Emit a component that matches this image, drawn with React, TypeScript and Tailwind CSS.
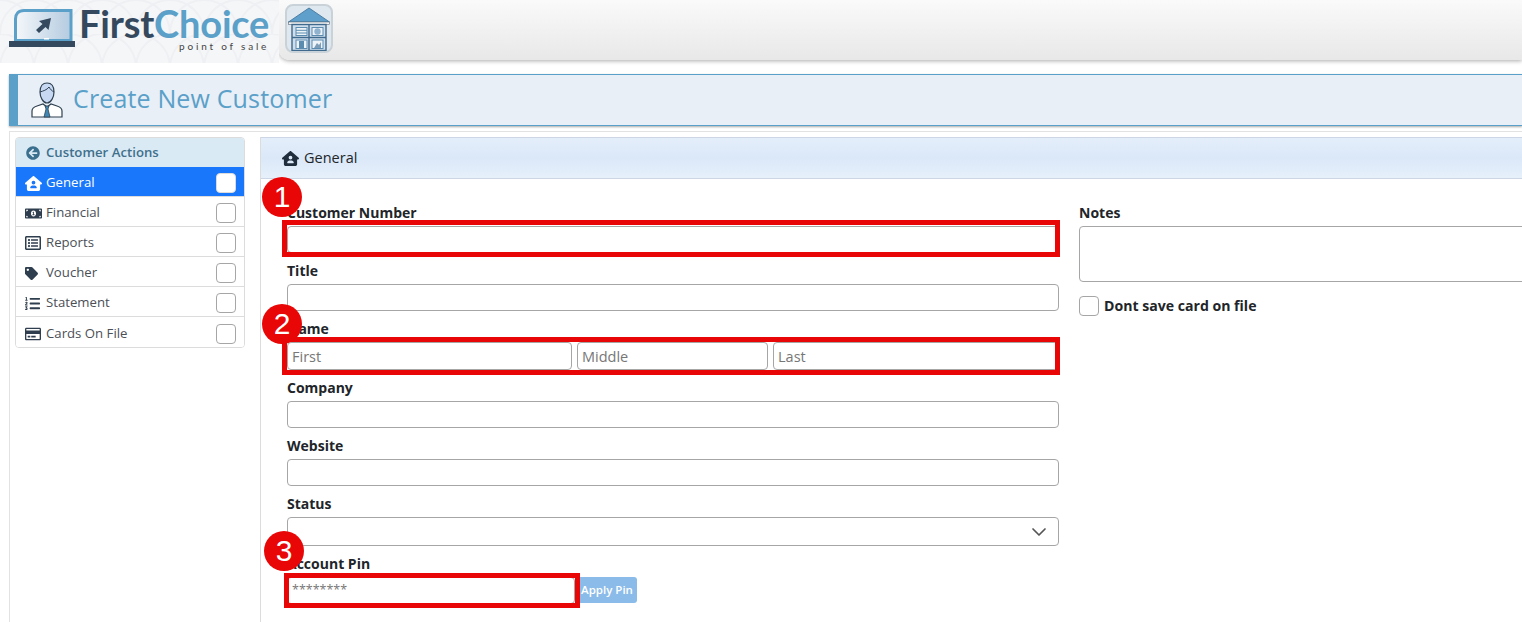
import { ReactNode } from "react";
import { FaArrowCircleLeft, FaRegListAlt, FaTag, FaListOl, FaRegCreditCard, FaMoneyBillAlt } from "react-icons/fa";
import { FaHouseUser } from "react-icons/fa6";

const MENU = [
  { label: "General", icon: FaHouseUser, size: 17, active: true },
  { label: "Financial", icon: FaMoneyBillAlt, size: 17 },
  { label: "Reports", icon: FaRegListAlt, size: 16 },
  { label: "Voucher", icon: FaTag, size: 13 },
  { label: "Statement", icon: FaListOl, size: 15 },
  { label: "Cards On File", icon: FaRegCreditCard, size: 16 },
];

const inputCls = "block w-full h-[27px] rounded-[4px] border border-[#a6a6a6] bg-white px-[4px] text-[14.5px] placeholder:text-[#777]";

function Logo() {
  return (
    <div className="relative flex h-[63px] w-[279px] shrink-0 items-start overflow-hidden bg-[#f5f6f8] pl-[9px] pt-[9px]">
      {/* faint arcs behind the logo */}
      <svg width="279" height="63" className="absolute left-0 top-0">
        <defs>
          <pattern id="arcs" width="34" height="34" patternUnits="userSpaceOnUse">
            <path d="M0 34C0 15 15 0 34 0M0 0c19 0 34 15 34 34" fill="none" stroke="#eff0f3" strokeWidth="2" />
          </pattern>
        </defs>
        <rect width="279" height="63" fill="url(#arcs)" />
      </svg>
      <svg width="66" height="38" viewBox="0 0 66 38" className="relative shrink-0">
        <defs>
          <linearGradient id="screen" x1="0" y1="0" x2="1" y2="0">
            <stop offset="0" stopColor="#f4f7fa" />
            <stop offset="1" stopColor="#b4cbe0" />
          </linearGradient>
        </defs>
        <path d="M15 1.500h47v30H6.500V10c0-5 3-8.500 8.500-8.500z" fill="url(#screen)" stroke="#5ba0c8" strokeWidth="3" />
        <rect x="0" y="32" width="66" height="6" fill="#34495e" />
        <rect x="35" y="29" width="5" height="1.500" fill="#fff" />
        <path d="M42 9L30 12l3.500 3L27 21l3 3 6.500-6 3 3z" fill="#34495e" />
      </svg>
      <div className="relative ml-[4px] flex flex-col font-['Lato',sans-serif]">
        <div className="-mt-[3px] h-[34px] text-[38px] font-bold leading-[34px] tracking-[-0.2px]">
          <span className="text-[#34495e]">First</span>
          <span className="text-[#5ba0c8]">Choice</span>
        </div>
        <div className="mt-[1px] text-right text-[10px] leading-[10px] tracking-[2.800px] text-[#444]">point of sale</div>
      </div>
    </div>
  );
}

function HouseTile() {
  return (
    <div className="flex h-[49px] w-[48px] items-center justify-center rounded-[8px] border-2 border-[#c9d2d9] bg-[#dfe7ef]">
      <svg width="42" height="44" viewBox="0 0 42 44">
        <path d="M21 1L41.500 15H.5z" fill="#5f9fcb" stroke="#4d7ea3" />
        <rect x=".5" y="15" width="41" height="2.500" fill="#f5f5f5" stroke="#567" strokeWidth="0.6" />
        <rect x="4" y="17.500" width="34" height="26" fill="#cfdeeb" stroke="#3f6a8e" strokeWidth="1.400" />
        <path d="M21 18v25M4 30.500h34" stroke="#3f6a8e" strokeWidth="1.400" />
        <rect x="8" y="20.500" width="11" height="8" fill="#eef3f8" stroke="#5b8cb0" />
        <path d="M8 23.300h11M8 26h11" stroke="#5b8cb0" />
        <rect x="24" y="20.500" width="11" height="8" fill="#eef3f8" stroke="#5b8cb0" />
        <circle cx="29.500" cy="24.500" r="3.200" fill="#8fb2cf" />
        <rect x="8" y="33" width="11" height="8.500" fill="#eef3f8" stroke="#5b8cb0" />
        <rect x="11" y="34" width="5" height="7" fill="#5b8cb0" />
        <rect x="24" y="33" width="11" height="8.500" fill="#eef3f8" stroke="#5b8cb0" />
        <path d="M26 41l3-5 2 2 2-3v6z" fill="#7c9cb8" />
      </svg>
    </div>
  );
}

function Person() {
  return (
    <svg width="32" height="36" viewBox="0 0 32 36" className="shrink-0">
      <path d="M1 35v-6c0-3 2-4 5-5l6-2 4 3 4-3 6 2c3 1 5 2 5 5v6z" fill="#fff" stroke="#2f4050" strokeWidth="1.200" />
      <path d="M9 10c0-6 3-9 7-9s7 3 7 9c0 5-3 11-7 11s-7-6-7-11z" fill="#c6d8f2" stroke="#2f4050" strokeWidth="1.200" />
      <path d="M9 10c3-1 7-2 9-5 1 2 3 4 5 5" fill="none" stroke="#2f4050" strokeWidth="1" />
      <path d="M14 24h4l-1 3 2 8h-6l2-8z" fill="#3f88b5" stroke="#2f4050" strokeWidth="0.800" />
    </svg>
  );
}

function Field({ label, children, wrap }: { label: string; children: ReactNode; wrap?: string }) {
  return (
    <div className={wrap ?? "mb-[8px]"}>
      <label className="block h-[23px] text-[14px] font-bold leading-[20px] text-[#212529]">{label}</label>
      {children}
    </div>
  );
}

function Marker({ n, cls }: { n: number; cls: string }) {
  return (
    <div className={`absolute z-20 flex h-[40px] w-[40px] items-center justify-center rounded-full bg-[#e90606] font-['Liberation_Sans',sans-serif] text-[30px] leading-none text-white ${cls}`}>
      {n}
    </div>
  );
}

function Highlight({ cls }: { cls: string }) {
  return <div className={`pointer-events-none absolute z-10 border-[5px] border-[#e90606] ${cls}`} />;
}

export default function App() {
  return (
    <div className="h-[622px] w-[1522px] overflow-hidden bg-white font-['Open_Sans',sans-serif] text-[#212529]">
      <header className="flex h-[63px] items-start">
        <Logo />
        <div className="flex h-[60px] flex-1 items-start rounded-bl-[10px] bg-gradient-to-b from-[#fafafa] to-[#e8e8e8] pl-[6px] pt-[4px] shadow-[0_1px_4px_#aaa]">
          <HouseTile />
        </div>
      </header>

      <div className="ml-[9px] mt-[11px] flex h-[52px] items-center gap-[10px] border-y border-[#5ba0c8] border-l-[9px] bg-[#e8eff7] pl-[13px] shadow-[0_1px_2px_#aaa]">
        <Person />
        <h1 className="-mt-[3px] text-[25px] leading-none tracking-[0.15px] text-[#5ba0c8]">Create New Customer</h1>
      </div>

      <div className="ml-[9px] mt-[5px] flex h-[491px] border-l border-t border-[#e2e2e2]">
        <aside className="w-[250px] shrink-0 pl-[5px] pt-[5px]">
          <div className="w-[230px] overflow-hidden rounded-[4px] border border-[#dcdcdc] text-[13.2px]">
            <div className="flex h-[29px] items-center gap-[6px] bg-[#d9eaf5] pl-[10px] pt-[1px] font-semibold text-[#41708c]">
              <FaArrowCircleLeft className="text-[14px] text-[#3b6f8e]" />
              Customer Actions
            </div>
            {MENU.map((m) => (
              <div
                key={m.label}
                className={`flex h-[30px] items-center border-b border-[#dcdcdc] pl-[9px] pr-[8px] pt-[3px] last:border-b-0 ${m.active ? "bg-[#1877fb] text-white" : "bg-white text-[#4b4f56]"}`}
              >
                <span className={`flex w-[21px] shrink-0 ${m.active ? "text-white" : "text-[#2f3e4e]"}`}>
                  <m.icon size={m.size} />
                </span>
                {m.label}
                <span className={`ml-auto h-[20px] w-[20px] rounded-[4px] border ${m.active ? "border-[#dcdcdc] bg-white" : "border-[#a6a6a6] bg-white"}`} />
              </div>
            ))}
          </div>
        </aside>

        <main className="mt-[5px] flex-1 border-l border-[#dcdcdc]">
          <div className="flex h-[42px] items-center gap-[5px] border-b border-t border-[#ccd6e4] bg-gradient-to-b from-[#e4eefb] via-[#dbe8f8] to-[#e6f0fb] pl-[21px] text-[14.5px] text-[#212529]">
            <FaHouseUser className="text-[17px] text-[#1f2d3d]" />
            General
          </div>
          <div className="flex gap-[20px] pl-[26px] pt-[24px]">
            <div className="w-[772px] shrink-0">
              <div className="relative">
                <Marker n={1} cls="left-[-25px] top-[-26px]" />
                <Highlight cls="left-[-5px] right-[-1px] top-[17px] h-[37px]" />
                <Field label="Customer Number"><input className={inputCls} /></Field>
              </div>
              <Field label="Title"><input className={inputCls} /></Field>
              <div className="relative">
                <Marker n={2} cls="left-[-25px] top-[-15px]" />
                <Highlight cls="left-[-5px] right-[-1px] top-[18px] h-[38px]" />
                <Field label="Name">
                  <div className="flex gap-[5px]">
                    <input placeholder="First" className={`${inputCls} !h-[28px] !w-[285px]`} />
                    <input placeholder="Middle" className={`${inputCls} !h-[28px] !w-[191px]`} />
                    <input placeholder="Last" className={`${inputCls} !h-[28px] !w-[286px]`} />
                  </div>
                </Field>
              </div>
              <Field label="Company"><input className={inputCls} /></Field>
              <Field label="Website"><input className={inputCls} /></Field>
              <Field label="Status">
                <div className="relative flex h-[29px] items-center justify-end rounded-[4px] border border-[#a6a6a6] pr-[11px]">
                  <svg width="16" height="10" viewBox="0 0 16 10" fill="none" stroke="#555" strokeWidth="1.700" strokeLinecap="round" strokeLinejoin="round">
                    <path d="M2 2l6 6 6-6" />
                  </svg>
                </div>
              </Field>
              <div className="relative">
                <Marker n={3} cls="left-[-23px] top-[-23px]" />
                <Highlight cls="left-[-3px] top-[19px] h-[35px] w-[296px]" />
                <Field label="Account Pin">
                  <div className="flex gap-[2px]">
                    <input placeholder="********" className={`${inputCls} !w-[288px] !pb-[3px] !text-[12.5px]`} />
                    <button className="h-[26px] w-[60px] rounded-[3px] bg-[#8abbe9] text-[11.5px] font-semibold text-white">Apply Pin</button>
                  </div>
                </Field>
              </div>
            </div>

            <div className="w-[500px] shrink-0">
              <Field label="Notes" wrap="mb-[13px]">
                <textarea className="block h-[56px] w-full resize-none rounded-[4px] border border-[#a6a6a6]" />
              </Field>
              <div className="flex items-center gap-[5px]">
                <span className="h-[20px] w-[20px] rounded-[4px] border border-[#a6a6a6]" />
                <span className="text-[14.1px] font-bold">Dont save card on file</span>
              </div>
            </div>
          </div>
        </main>
      </div>
    </div>
  );
}
